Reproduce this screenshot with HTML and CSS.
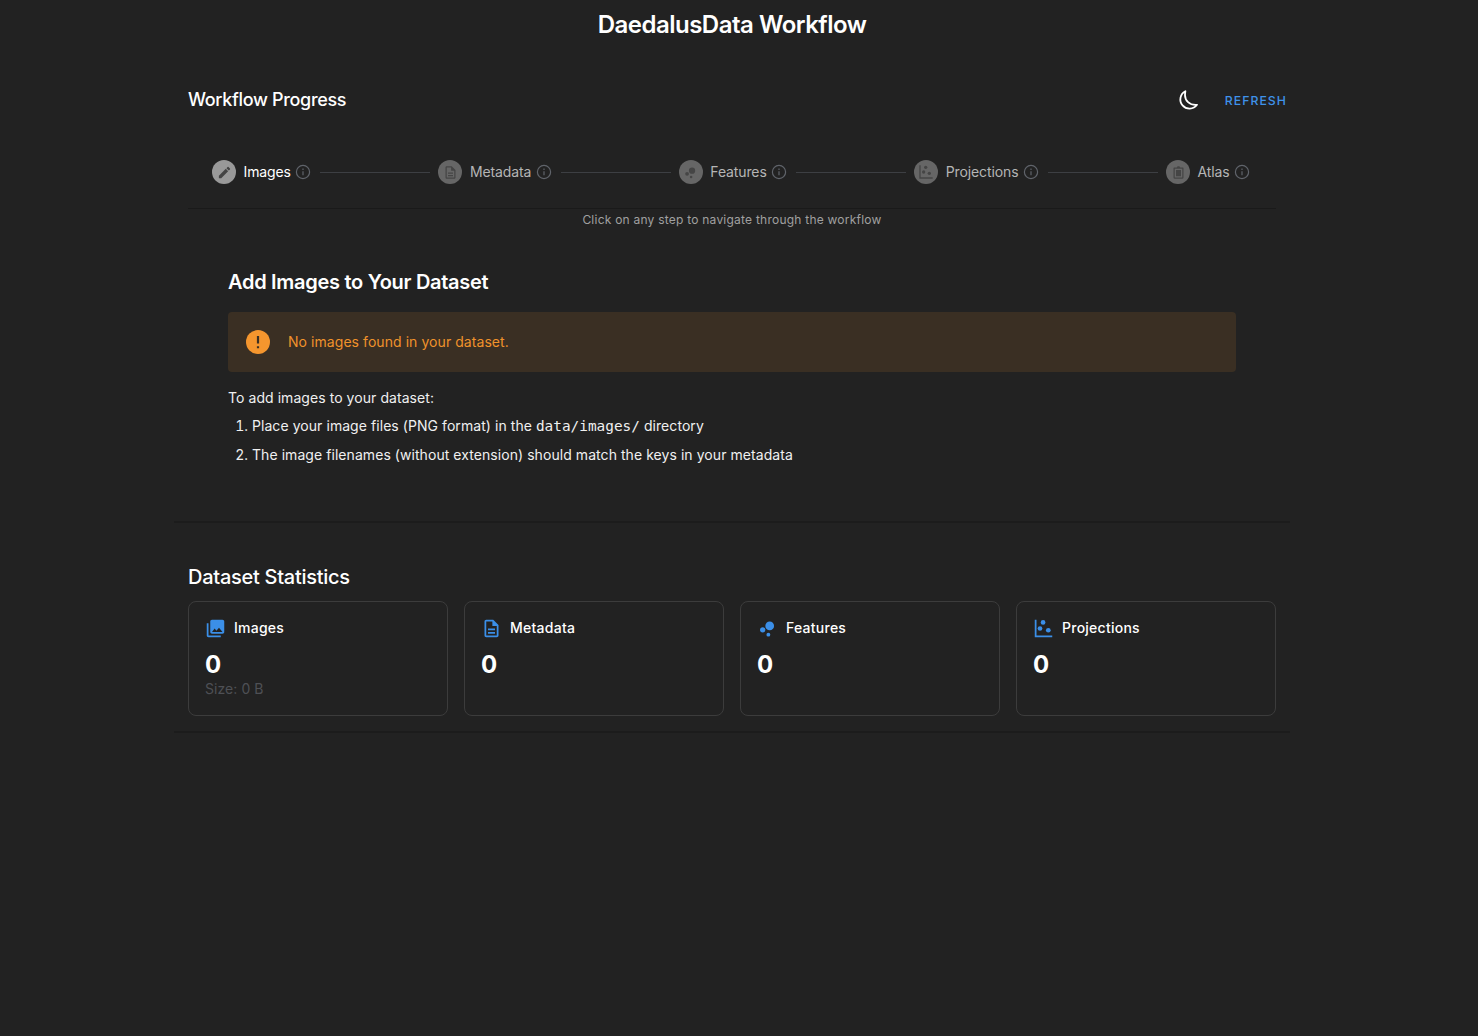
FILE: index.html

```html
<!DOCTYPE html>
<html lang="en">
<head>
  <meta charset="UTF-8" />
  <meta name="viewport" content="width=device-width, initial-scale=1.0"/>
  <title>DaedalusData Workflow</title>
  <link rel="stylesheet" href="styles.css">
</head>
<body>
  <header class="app-title">
    <h1>DaedalusData Workflow</h1>
  </header>

  <main class="page">
    <!-- progress -->
    <section class="progress">
      <div class="progress-head">
        <h2>Workflow Progress</h2>
        <div class="progress-actions">
          <svg class="moon" viewBox="0 0 24 24" width="24" height="24"><path d="M9.4 3.2a9.2 9.2 0 1 0 11.6 13.6c-.5.1-1 .1-1.5.1C13.6 16.9 9 12.6 9 7.2c0-1.4.1-2.8.4-4z" fill="none" stroke="#fff" stroke-width="1.8" stroke-linejoin="round"/></svg>
          <span class="refresh">REFRESH</span>
        </div>
      </div>

      <div class="stepper">
        <div class="step active">
          <span class="step-dot"><svg viewBox="0 0 24 24" width="15" height="15"><path d="M3 17.25V21h3.75L17.81 9.94l-3.75-3.75L3 17.25zM20.71 7.04a1 1 0 0 0 0-1.41l-2.34-2.34a1 1 0 0 0-1.41 0l-1.83 1.83 3.75 3.75 1.83-1.83z"/></svg></span>
          <span class="step-label">Images</span>
          <svg class="info" viewBox="0 0 16 16" width="16" height="16"><circle cx="8" cy="8" r="6.6"/><path d="M8 7.2v4M8 4.5v1.4"/></svg>
        </div>
        <div class="step-line"></div>
        <div class="step">
          <span class="step-dot"><svg viewBox="0 0 24 24" width="15" height="15"><path d="M8 16h8v2H8zm0-4h8v2H8zm6-10H6c-1.1 0-2 .9-2 2v16c0 1.1.89 2 1.99 2H18c1.1 0 2-.9 2-2V8l-6-6zm4 18H6V4h7v5h5v11z"/></svg></span>
          <span class="step-label">Metadata</span>
          <svg class="info" viewBox="0 0 16 16" width="16" height="16"><circle cx="8" cy="8" r="6.6"/><path d="M8 7.2v4M8 4.5v1.4"/></svg>
        </div>
        <div class="step-line"></div>
        <div class="step">
          <span class="step-dot"><svg viewBox="0 0 24 24" width="15" height="15"><circle cx="14.5" cy="9" r="5"/><circle cx="6.5" cy="14" r="3"/><circle cx="13" cy="19" r="2"/></svg></span>
          <span class="step-label">Features</span>
          <svg class="info" viewBox="0 0 16 16" width="16" height="16"><circle cx="8" cy="8" r="6.6"/><path d="M8 7.2v4M8 4.5v1.4"/></svg>
        </div>
        <div class="step-line"></div>
        <div class="step">
          <span class="step-dot"><svg viewBox="0 0 24 24" width="16" height="16"><path d="M2 2h2v18h18v2H2z"/><circle cx="8.5" cy="12" r="2.5"/><circle cx="11.5" cy="5" r="2.5"/><circle cx="17" cy="14" r="2.5"/></svg></span>
          <span class="step-label">Projections</span>
          <svg class="info" viewBox="0 0 16 16" width="16" height="16"><circle cx="8" cy="8" r="6.6"/><path d="M8 7.2v4M8 4.5v1.4"/></svg>
        </div>
        <div class="step-line"></div>
        <div class="step">
          <span class="step-dot"><svg viewBox="0 0 24 24" width="15" height="15"><path d="M19 4h-4.2C14.4 2.8 13.3 2 12 2s-2.4.8-2.8 2H5a1 1 0 0 0-1 1v15a2 2 0 0 0 2 2h12a2 2 0 0 0 2-2V5a1 1 0 0 0-1-1zM6 6h12v14H6zM8 8h8v10H8z"/></svg></span>
          <span class="step-label">Atlas</span>
          <svg class="info" viewBox="0 0 16 16" width="16" height="16"><circle cx="8" cy="8" r="6.6"/><path d="M8 7.2v4M8 4.5v1.4"/></svg>
        </div>
      </div>
      <p class="hint">Click on any step to navigate through the workflow</p>

      <div class="content">
        <h3>Add Images to Your Dataset</h3>
        <div class="alert">
          <svg viewBox="0 0 24 24" width="24" height="24"><circle cx="12" cy="12" r="12" fill="#f5962e"/><path d="M12 6v7.5M12 16.2v2" stroke="#3a2f23" stroke-width="2.2" fill="none"/></svg>
          <span>No images found in your dataset.</span>
        </div>
        <p class="intro">To add images to your dataset:</p>
        <ol class="steps-list">
          <li>Place your image files (PNG format) in the <code>data/images/</code> directory</li>
          <li>The image filenames (without extension) should match the keys in your metadata</li>
        </ol>
      </div>
    </section>

    <!-- stats -->
    <section class="stats">
      <h2>Dataset Statistics</h2>
      <div class="stat-grid">
        <div class="stat-card">
          <div class="stat-head">
            <svg viewBox="0 0 24 24"><path d="M22 16V4c0-1.1-.9-2-2-2H8c-1.1 0-2 .9-2 2v12c0 1.1.9 2 2 2h12c1.1 0 2-.9 2-2zm-11-4l2.03 2.71L16 11l4 5H8l3-4zM2 6v14c0 1.1.9 2 2 2h14v-2H4V6H2z"/></svg>
            <span>Images</span>
          </div>
          <div class="stat-num">0</div>
          <div class="stat-sub">Size: 0 B</div>
        </div>
        <div class="stat-card">
          <div class="stat-head">
            <svg viewBox="0 0 24 24"><path d="M8 16h8v2H8zm0-4h8v2H8zm6-10H6c-1.1 0-2 .9-2 2v16c0 1.1.89 2 1.99 2H18c1.1 0 2-.9 2-2V8l-6-6zm4 18H6V4h7v5h5v11z"/></svg>
            <span>Metadata</span>
          </div>
          <div class="stat-num">0</div>
        </div>
        <div class="stat-card">
          <div class="stat-head">
            <svg viewBox="0 0 24 24"><circle cx="14.5" cy="9" r="5"/><circle cx="6.5" cy="13.5" r="3"/><circle cx="13" cy="19" r="2.2"/></svg>
            <span>Features</span>
          </div>
          <div class="stat-num">0</div>
        </div>
        <div class="stat-card">
          <div class="stat-head">
            <svg viewBox="0 0 24 24"><path d="M2 2h2v18h18v2H2z"/><circle cx="8" cy="12" r="2.7"/><circle cx="11.5" cy="5" r="2.7"/><circle cx="17.5" cy="14" r="2.7"/></svg>
            <span>Projections</span>
          </div>
          <div class="stat-num">0</div>
        </div>
      </div>
    </section>
  </main>
</body>
</html>
```

FILE: styles.css

```css
* { box-sizing: border-box; }
body { font-family: Inter, "Liberation Sans", sans-serif; background: #222222; color: #fff; margin: 0; padding: 0 14px 0 0; font-size: 14px; letter-spacing: 0.06px; }
h1, h2, h3, p, ol { margin: 0; }

.app-title { height: 50px; display: flex; justify-content: center; align-items: center; }
.app-title h1 { font-size: 24px; font-weight: 600; letter-spacing: -0.5px; line-height: 50px; }

.page { width: 1116px; margin: 0 auto; }

.progress { height: 473px; padding: 0 14px; border-bottom: 2px solid #1c1c1c; }
.progress-head { height: 100px; display: flex; justify-content: space-between; align-items: center; margin-right: -11px; }
.progress-head h2 { font-size: 18px; font-weight: 500; letter-spacing: -0.33px; margin-top: -1px; }
.progress-actions { display: flex; align-items: center; gap: 25px; }
.moon { display: block; }
.refresh { color: #3f92ea; font-size: 12.25px; font-weight: 500; letter-spacing: 1.05px; }

.stepper { height: 59px; padding: 0 26px 14px 24px; display: flex; align-items: center; border-bottom: 1px solid #1a1a1a; }
.step { display: flex; align-items: center; color: #b5b5b5; }
.step.active { color: #fff; }
.step-dot { width: 24px; height: 24px; border-radius: 50%; background: #666; display: flex; align-items: center; justify-content: center; fill: #454545; margin-right: 7.5px; }
.step.active .step-dot { background: #999; fill: #444; }
.step-label { font-size: 14px; letter-spacing: -0.12px; padding-bottom: 2px; }
.info { margin-left: 4.5px; fill: none; stroke: #60646b; stroke-width: 1.2; }
.step-line { flex: 1; height: 1px; background: #3d3f43; margin: 0 8px 0 9px; }

.hint { text-align: center; font-size: 12px; color: #a0a0a0; line-height: 20px; letter-spacing: 0.23px; margin-top: 1px; }

.content { padding: 0 40px; }
.content h3 { font-size: 20px; font-weight: 600; letter-spacing: -0.29px; margin-top: 37px; line-height: 30px; }
.alert { height: 60px; margin-top: 15px; background: #3a2f23; border-radius: 4px; padding: 0 18px; display: flex; align-items: center; gap: 18px; color: #f0922b; }
.alert span { padding-bottom: 1px; }
.intro { margin-top: 16px; line-height: 20px; color: #f0f0f0; }
.steps-list { padding-left: 24px; color: #f0f0f0; margin-top: 7px; }
.steps-list li { line-height: 21px; margin-bottom: 8px; }
.steps-list code { font-family: "DejaVu Sans Mono", "Liberation Mono", monospace; font-size: 14.4px; letter-spacing: 0; line-height: 1; }

.stats { padding: 0 14px; height: 210px; border-bottom: 2px solid #1c1c1c; }
.stats h2 { font-size: 20px; font-weight: 500; letter-spacing: -0.27px; padding-top: 41px; line-height: 26px; margin-bottom: 11px; }
.stat-grid { display: grid; grid-template-columns: repeat(4, 1fr); gap: 16px; }
.stat-card { height: 115px; border: 1px solid #3c3c3c; border-radius: 8px; padding: 16px; }
.stat-head { display: flex; align-items: center; gap: 8px; height: 20px; font-weight: 500; letter-spacing: 0.25px; }
.stat-head span { padding-bottom: 2px; }
.stat-head svg { fill: #3b8fe8; width: 21px; height: 21px; flex: none; }
.stat-num { font-size: 24px; font-weight: 700; line-height: 30px; margin-top: 12px; letter-spacing: 0; }
.stat-sub { color: #4e5055; line-height: 20px; margin-top: -1px; }
```
